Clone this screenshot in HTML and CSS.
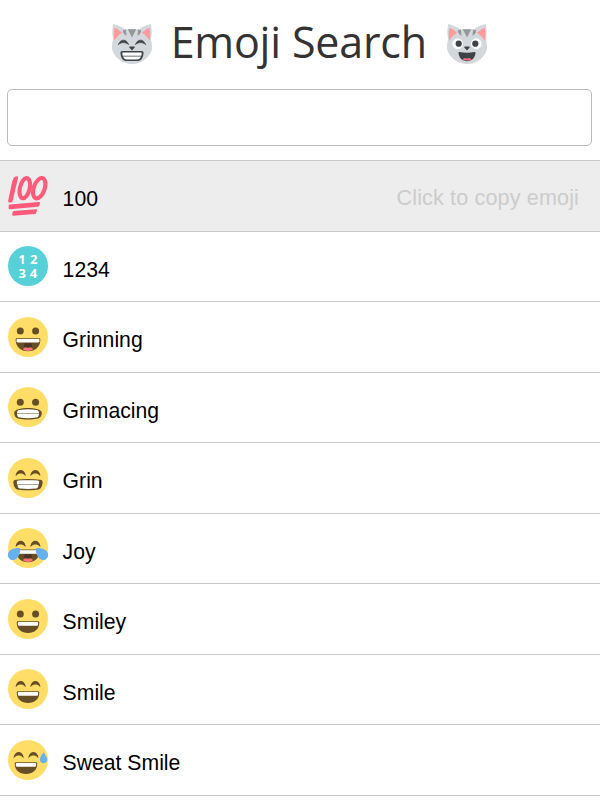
FILE: index.html
```html
<!DOCTYPE html>
<html lang="en">
<head>
<meta charset="utf-8">
<title>Emoji Search</title>
<link rel="stylesheet" href="styles.css">
</head>
<body>
<svg class="defs" aria-hidden="true">
  <defs>
    <g id="face"><circle cx="20" cy="20" r="20" fill="#ffdd67"/></g>
    <g id="dots" fill="#664e27"><circle cx="12.3" cy="13.9" r="3.5"/><circle cx="27.6" cy="13.9" r="3.5"/></g>
    <g id="arcs" fill="#664e27"><path d="M7.600 17.200C8.600 13.600 10.500 12 12.700 12s4.100 1.600 5 5.200c.1.600-.4.800-.8.400-1.200-1.600-2.600-2-4.200-2s-3 .4-4.300 2c-.4.400-.9.100-.8-.4z"/><path d="M22.300 17.200c1-3.600 2.900-5.200 5.100-5.200s4.100 1.600 5 5.200c.1.600-.4.800-.8.400-1.200-1.600-2.600-2-4.200-2s-3 .4-4.300 2c-.4.400-.9.100-.8-.4z"/></g>
    <g id="open"><path d="M10.200 22.200h19.600c1 0 1.600.6 1.500 1.700-.3 6.200-4.700 10-11.300 10S9 30.100 8.700 23.900c-.1-1.100.5-1.700 1.500-1.700z" fill="#664e27"/><path d="M11 23h18c.8 0 1.200.5 1.200 1.300l-.1 1.500c-.1.700-.5 1-1.200 1H11.100c-.7 0-1.100-.3-1.200-1l-.1-1.500c0-.8.4-1.300 1.200-1.300z" fill="#fff"/></g>
    <g id="cat">
      <path d="M1.300 0C6 1 10 3 13 5.200h14C30 3 34 1 38.700 0c1.100 4.200 1.300 10 .2 15 .9 3.500 1.200 6.500 1.100 10-2 8-9.800 15-20 15S2 33 0 25c-.1-3.500.2-6.500 1.100-10C0 10 .2 4.200 1.300 0z" fill="#d3d8dc"/>
      <path d="M2.500 3.700c3 1 5.600 3.200 7.500 5.100-3.200 2-6 4.700-7.600 8-.9-4-.9-9 .1-13.100zm35 0c-3 1-5.600 3.200-7.500 5.100 3.200 2 6 4.700 7.600 8 .9-4 .9-9-.1-13.100z" fill="#ff9b9b"/>
      <path d="M15.800 5.200h8.400L20 13.500zM10.600 6.600l3.400-1 .5 6.200c-2-.8-3.400-2.600-3.900-5.200zm18.800 0-3.400-1-.5 6.200c2-.8 3.400-2.600 3.900-5.200z" fill="#94989b"/>
      <path d="M17.600 22.500h4.800c.7.700.2 1.700-1.100 2.500L20 26.500l-1.300-1.500c-1.300-.8-1.800-1.800-1.100-2.500z" fill="#3e4347"/>
    </g>
  </defs>
</svg>
<header class="header">
  <svg class="cat" viewBox="0 0 40 40"><use href="#cat"/><path d="M6.400 20.500C8 17 9.700 16.200 11.500 16.200s3.700 1 5 4.300c-3.100-2.600-7-2.500-10.100 0zM23.500 20.500c1.300-3.300 3.200-4.300 5-4.300s3.500.8 5.100 4.300c-3.100-2.500-7-2.600-10.100 0z" fill="#3e4347" stroke="#3e4347" stroke-width=".8"/><path d="M10.500 27.100h19c1.500 0 2.200.8 2 2.300-.5 5-2.800 7.600-6 7.600h-11c-3.200 0-5.500-2.600-6-7.600-.2-1.500.5-2.300 2-2.300z" fill="#3e4347"/><path d="M10.300 28.400h19.400l-.3 3.300H10.600zM11 32.500h18c-.8 2-2 3-3.600 3H14.600c-1.600 0-2.800-1-3.600-3z" fill="#fff"/></svg>
  <h1 class="title">Emoji Search</h1>
  <svg class="cat" viewBox="0 0 40 40"><use href="#cat"/><circle cx="10.700" cy="19.700" r="5.400" fill="#fff"/><circle cx="29.300" cy="19.700" r="5.400" fill="#fff"/><circle cx="11.700" cy="19.700" r="3.100" fill="#3e4347"/><circle cx="28.300" cy="19.700" r="3.100" fill="#3e4347"/><path d="M12.700 28.100c4.700.8 9.900.8 14.600 0 .8-.1 1.300.4 1.200 1.200-.7 5-3.800 7.900-8.500 7.900s-7.800-2.900-8.500-7.900c-.1-.8.4-1.300 1.200-1.200z" fill="#3e4347"/><path d="M15.500 35.400c1.200-1.500 3-1.300 4.500-.8 1.500-.5 3.300-.7 4.500.8-2.500 1.600-6.500 1.600-9 0z" fill="#ff717f"/></svg>
</header>
<div class="search"><input class="search-input" type="text" aria-label="Search emoji"></div>
<ul class="results">
  <li class="row active">
    <svg class="emoji" viewBox="0 0 40 40"><path d="M5.800 1.800c.8-.9 1.700-1.400 2.700-1.500 1.200-.1 1.700.6 1.500 1.800L4.600 24.900c-.3 1-1 1.400-2.200 1.500-1.800.1-2.600-.3-2.200-2L4.300 5z" fill="#ff5a79"/><g fill="none" stroke="#ff5a79" stroke-width="4.100"><ellipse cx="16.800" cy="12.200" rx="4.800" ry="10.300" transform="rotate(13 16.800 12.200)"/><ellipse cx="31.200" cy="12.200" rx="5.400" ry="10.600" transform="rotate(19 31.200 12.200)"/></g><path d="M1.800 28.400 30.900 26c1 0 1.300.6 1 1.500l-.6 2c-.2.700-.7 1.100-1.500 1.200L2 33.300c-1 0-1.500-.5-1.400-1.400l.1-2.300c0-.7.300-1.100 1.100-1.200zM5.800 34.900l22.300-1.700c.9 0 1.100.5.800 1.400l-.8 2.300c-.2.700-.7.900-1.400 1L5.300 39.800c-.9 0-1.300-.4-1.200-1.200l.5-2.500c.1-.7.500-1.100 1.200-1.200z" fill="#ff5a79"/></svg>
    <span class="name">100</span><span class="hint">Click to copy emoji</span>
  </li>
  <li class="row">
    <svg class="emoji" viewBox="0 0 40 40"><circle cx="20" cy="20" r="20" fill="#57d1d8"/><g class="digits"><text x="14" y="18.200">1</text><text x="25.700" y="18.200">2</text><text x="14.300" y="31.800">3</text><text x="25.500" y="31.800">4</text></g></svg>
    <span class="name">1234</span>
  </li>
  <li class="row">
    <svg class="emoji" viewBox="0 0 40 40"><use href="#face"/><use href="#dots"/><path d="M9 21.300h22c1 0 1.500.6 1.400 1.600C32 29.700 27.400 34.200 20 34.200S8 29.700 7.600 22.900c-.1-1 .4-1.600 1.400-1.600z" fill="#664e27"/><path d="M9.400 22.100h21.200c.6 0 .9.300.9.900v1.300c0 .7-.4 1.100-1.100 1.100H9.600c-.7 0-1.100-.4-1.100-1.100V23c0-.6.300-.9.900-.9z" fill="#fff"/><path d="M16 30v-1.600c0-3 3.200-2.800 4-1.400.8-1.400 4-1.600 4 1.400V30z" fill="#4c3526"/><path d="M15 32.200c1-2.300 3.500-2 5-1.200 1.500-.8 4-1.100 5 1.200-2.500 2.300-7.500 2.300-10 0z" fill="#ff717f"/></svg>
    <span class="name">Grinning</span>
  </li>
  <li class="row">
    <svg class="emoji" viewBox="0 0 40 40"><use href="#face"/><use href="#dots" y="1.300"/><path d="M11.500 22c5-1.300 12-1.300 17 0 3.300.7 5.300 1.900 5.300 4 0 2.800-1.600 5.300-4.500 5.700-5.500.9-13.100.9-18.600 0C7.800 31.300 6.200 28.800 6.200 26c0-2.100 2-3.300 5.300-4z" fill="#664e27"/><path d="M11.500 22.900c5.500-.9 11.500-.9 17 0 1.900.3 2.600 1.300 2.500 3.600H9c-.1-2.300.6-3.300 2.500-3.600zM9 27h22c-.2 2.400-.8 3.300-2.800 3.600-5.400.7-11 .7-16.400 0-2-.3-2.600-1.200-2.800-3.600z" fill="#fff"/></svg>
    <span class="name">Grimacing</span>
  </li>
  <li class="row">
    <svg class="emoji" viewBox="0 0 40 40"><use href="#face"/><use href="#arcs"/><path d="M8 21.700c8-.8 16-.8 24 0 2 .2 2.900 1.400 2.600 3.200-.6 4.400-2.300 6.500-5.600 6.900-5.500.7-12.500.7-18 0-3.300-.4-5-2.500-5.600-6.900-.3-1.800.6-3 2.600-3.200z" fill="#664e27"/><path d="M10.200 22.600c6.500-.6 13.100-.6 19.600 0 1.100.1 1.500.7 1.400 1.700l-.3 2H9.100l-.3-2c-.1-1 .3-1.600 1.400-1.700zM9.400 26.800h21.200c-.4 2.700-1 3.600-2.700 3.800-5.300.5-10.500.5-15.800 0-1.700-.2-2.300-1.100-2.700-3.800z" fill="#fff"/></svg>
    <span class="name">Grin</span>
  </li>
  <li class="row">
    <svg class="emoji" viewBox="0 0 40 40"><use href="#face"/><use href="#arcs" y=".8"/><path d="M9.500 21.400h21c1 0 1.500.6 1.400 1.600-.5 6.900-4.900 11.200-11.900 11.200S8.600 29.900 8.100 23c-.1-1 .4-1.600 1.400-1.600z" fill="#664e27"/><path d="M10 22.200h20v3.600H10z" fill="#fff"/><path d="M16 30v-1.600c0-3 3.200-2.800 4-1.400.8-1.400 4-1.600 4 1.400V30z" fill="#4c3526"/><path d="M15 32.200c1-2.300 3.500-2 5-1.200 1.500-.8 4-1.100 5 1.200-2.500 2.300-7.500 2.300-10 0z" fill="#ff717f"/><path d="M12.200 20.200c-3.700-.6-7.800.3-10.300 2.300-2.400 2-2.700 5.500-.9 7.700 1.700 2.200 5 2.500 7.400.6 2.500-2.200 4.100-6.600 3.800-10.600zm15.600 0c3.700-.6 7.800.3 10.300 2.300 2.400 2 2.700 5.500.9 7.700-1.700 2.200-5 2.500-7.400.6-2.500-2.200-4.100-6.600-3.800-10.600z" fill="#65b1ef"/></svg>
    <span class="name">Joy</span>
  </li>
  <li class="row">
    <svg class="emoji" viewBox="0 0 40 40"><use href="#face"/><use href="#dots" y="1.200"/><use href="#open"/></svg>
    <span class="name">Smiley</span>
  </li>
  <li class="row">
    <svg class="emoji" viewBox="0 0 40 40"><use href="#face"/><use href="#arcs"/><use href="#open"/></svg>
    <span class="name">Smile</span>
  </li>
  <li class="row">
    <svg class="emoji" viewBox="0 0 40 40"><use href="#face"/><use href="#arcs" x="-2"/><use href="#open" x="-2"/><path d="M35.500 12.200c-1.900 2.500-3.600 5.500-3.600 7.300 0 2.200 1.500 3.700 3.600 3.700s3.600-1.500 3.600-3.700c0-1.800-1.700-4.800-3.600-7.300z" fill="#65b1ef"/></svg>
    <span class="name">Sweat Smile</span>
  </li>
</ul>
</body>
</html>
```

FILE: styles.css
```css
* {
  box-sizing: border-box;
}

body {
  margin: 0;
  background: #fff;
  color: #000;
  font-family: "Liberation Sans", Arial, sans-serif;
}

.defs {
  display: block;
  width: 0;
  height: 0;
}

.header {
  display: flex;
  justify-content: center;
  align-items: center;
  gap: 19px;
  height: 89px;
  padding: 0 1px 2px 0;
}

.cat {
  width: 40px;
  height: 40px;
}

.title {
  margin: 0 0 3px;
  padding-right: 1.5px;
  color: #333;
  font: 400 43px/60px "Open Sans", sans-serif;
  letter-spacing: -0.2px;
}

.search {
  padding: 0 8px 0 7px;
}

.search-input {
  display: block;
  width: 100%;
  height: 57px;
  padding: 0 14px;
  border: 1px solid #bbb;
  border-radius: 5px;
  outline: none;
  font: inherit;
  font-size: 21px;
}

.results {
  margin: 14px 0 0;
  padding: 0;
  list-style: none;
  border-top: 1px solid #c9c9c9;
}

.row {
  display: flex;
  align-items: center;
  height: 70.5px;
  padding: 0 21px 0 8px;
  border-bottom: 1px solid #c9c9c9;
}

.active {
  background: #ededed;
}

.emoji {
  flex: none;
  width: 40px;
  height: 40px;
}

.name {
  padding: 7px 0 0 14.6px;
  font-size: 21.2px;
  line-height: 26px;
}

.hint {
  margin-left: auto;
  padding-top: 4px;
  color: #ccc;
  font-size: 21.6px;
  letter-spacing: 0.13px;
  line-height: 26px;
}

.digits {
  fill: #fff;
  font: 700 13px "Open Sans", sans-serif;
  text-anchor: middle;
}
```
